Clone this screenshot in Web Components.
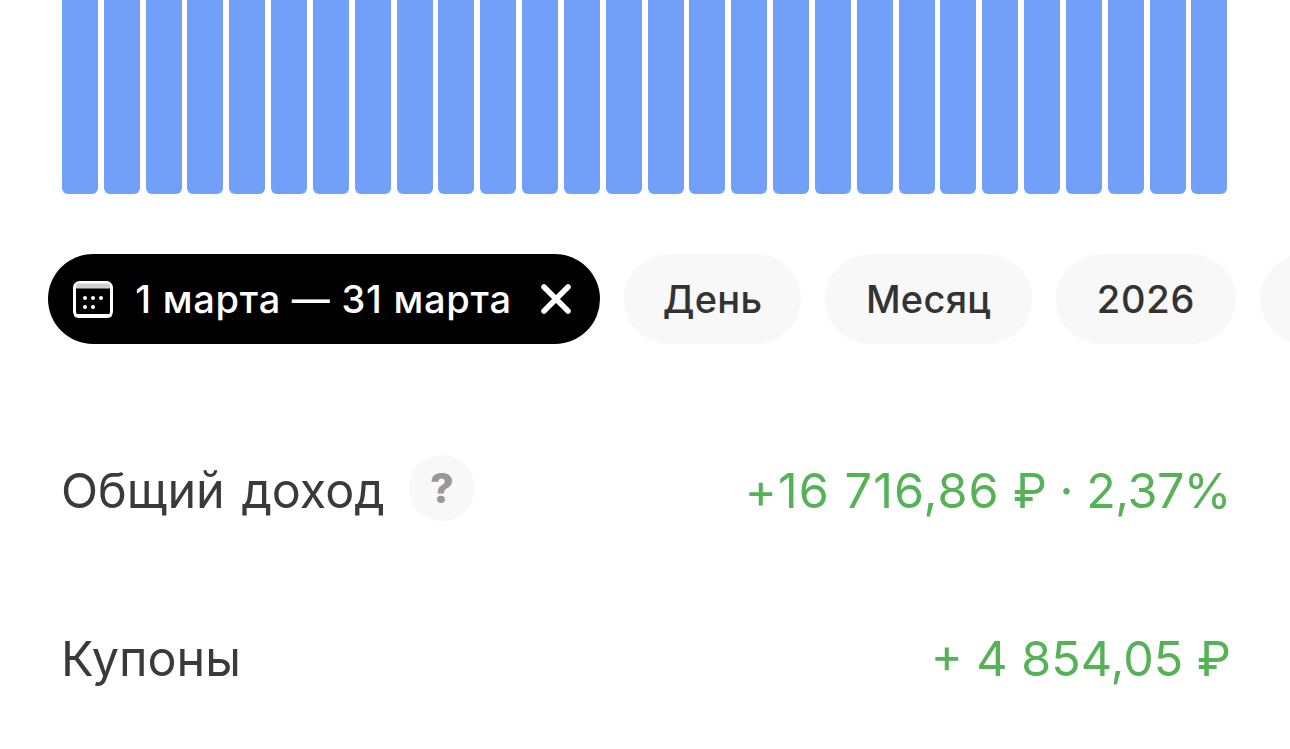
<!DOCTYPE html>
<html lang="ru">
<head>
<meta charset="utf-8">
<title>Доход</title>
<style>
  html, body { margin: 0; background: #fff; height: 749px; overflow: hidden; font-family: Inter, "Liberation Sans", sans-serif; }
</style>
</head>
<body>
<income-page></income-page>
<script>
class BarChart extends HTMLElement {
  constructor() {
    super();
    this.attachShadow({ mode: 'open' });
  }
  connectedCallback() {
    const count = Number(this.getAttribute('count'));
    this.shadowRoot.innerHTML = `
      <style>
        :host { display: flex; justify-content: space-between; height: 194px; padding: 0 62.5px 0 62px; box-sizing: border-box; width: 1290px; }
        i { display: block; width: 36px; background: #72a0f8; border-radius: 0 0 6px 6px; }
      </style>
      ${'<i></i>'.repeat(count)}
    `;
  }
}
customElements.define('bar-chart', BarChart);

class FilterPill extends HTMLElement {
  constructor() {
    super();
    this.attachShadow({ mode: 'open' });
    this.shadowRoot.innerHTML = `
      <style>
        :host { display: flex; align-items: center; justify-content: center; flex: none; height: 90px; box-sizing: border-box; border-radius: 45px; background: #f8f8f8; color: #333; font-size: 38px; font-weight: 500; white-space: nowrap; letter-spacing: .3px; }
        :host([active]) { background: #000; color: #fff; gap: 22px; letter-spacing: .75px; padding-right: 4px; }
      </style>
      <slot></slot>
    `;
  }
}
customElements.define('filter-pill', FilterPill);

class IncomeRow extends HTMLElement {
  constructor() {
    super();
    this.attachShadow({ mode: 'open' });
    this.shadowRoot.innerHTML = `
      <style>
        :host { display: flex; align-items: center; justify-content: space-between; height: 168px; padding: 0 59px 0 61px; font-size: 48.5px; color: #3a3a3a; }
        .label { display: flex; align-items: center; gap: 24px; word-spacing: 3px; }
        .value { color: #55b257; }
      </style>
      <div class="label"><slot name="label"></slot></div>
      <div class="value"><slot name="value"></slot></div>
    `;
  }
}
customElements.define('income-row', IncomeRow);

class IncomePage extends HTMLElement {
  constructor() {
    super();
    this.attachShadow({ mode: 'open' });
    this.shadowRoot.innerHTML = `
      <style>
        :host { display: block; width: 1290px; height: 749px; overflow: hidden; }
        .pills { display: flex; gap: 24px; margin-top: 60px; padding-left: 48px; }
        .rows { margin-top: 62px; }
        .hint { display: flex; align-items: center; justify-content: center; width: 66px; height: 66px; margin-top: -4px; border-radius: 50%; background: #f8f8f8; color: #97979c; font-size: 41px; font-weight: 800; line-height: 1; }
        .total { letter-spacing: -.5px; }
        .total span { letter-spacing: 1.1px; }
        svg { display: block; flex: none; }
        .close { margin-left: 7px; }
      </style>
      <bar-chart count="28"></bar-chart>
      <div class="pills">
        <filter-pill active style="width: 552px">
          <svg width="40" height="37" viewBox="0 0 40 37">
            <rect x="1.500" y="1.500" width="37" height="34" rx="5" fill="#000" stroke="#fff" stroke-width="3"/>
            <path d="M3 7.500V5a2.500 2.500 0 0 1 2.500-2.500h29A2.500 2.500 0 0 1 37 5v2.500z" fill="#cfcfcf"/>
            <path d="M1 33h38v.5a3 3 0 0 1-3 3H4a3 3 0 0 1-3-3z" fill="#fff"/>
            <g fill="#fff">
              <circle cx="12" cy="17" r="2"/><circle cx="20" cy="17" r="2"/><circle cx="28" cy="17" r="2"/>
              <circle cx="12" cy="26" r="2"/><circle cx="20" cy="26" r="2"/>
            </g>
          </svg>
          <span>1 марта — 31 марта</span>
          <svg class="close" width="30" height="30" viewBox="0 0 30 30"><path d="M3 3l24 24M27 3L3 27" fill="none" stroke="#fff" stroke-width="5.500" stroke-linecap="round"/></svg>
        </filter-pill>
        <filter-pill style="width: 177px">День</filter-pill>
        <filter-pill style="width: 207px">Месяц</filter-pill>
        <filter-pill style="width: 180px; letter-spacing: .8px">2026</filter-pill>
        <filter-pill style="width: 180px"></filter-pill>
      </div>
      <div class="rows">
        <income-row>
          <span slot="label">Общий доход</span>
          <span slot="label" class="hint">?</span>
          <span slot="value" class="total"><span>+16 716,86</span> ₽ · 2,37%</span>
        </income-row>
        <income-row>
          <span slot="label">Купоны</span>
          <span slot="value">+ 4 854,05 ₽</span>
        </income-row>
      </div>
    `;
  }
}
customElements.define('income-page', IncomePage);
</script>
</body>
</html>
